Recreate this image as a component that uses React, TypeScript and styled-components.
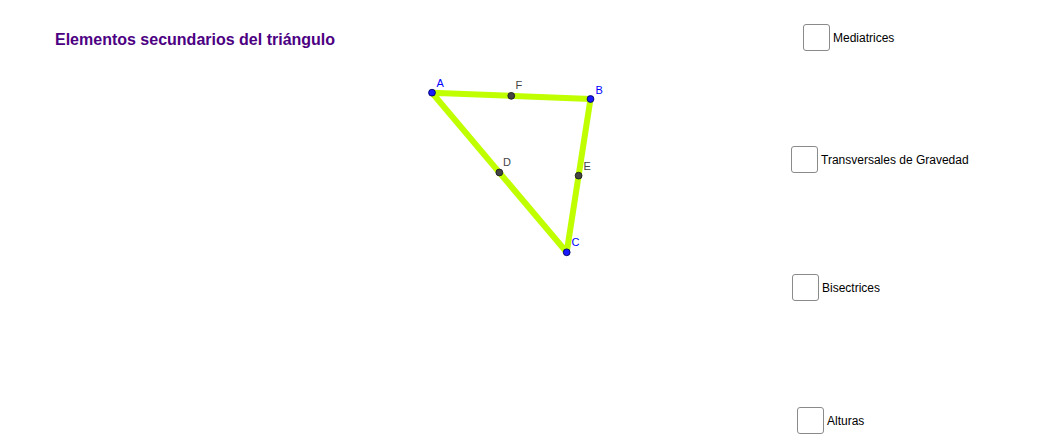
import { FC } from 'react';
import styled, { createGlobalStyle } from 'styled-components';

const GlobalStyle = createGlobalStyle`
  html, body {
    margin: 0;
    padding: 0;
    background: #ffffff;
  }
  body {
    font-family: 'Liberation Sans', Arial, sans-serif;
  }
`;

// the geogebra graphics view: everything on it sits at its own coordinates
const Stage = styled.div`
  position: relative;
  width: 1046px;
  height: 444px;
  overflow: hidden;
  background: #ffffff;
`;

const Title = styled.h1`
  position: absolute;
  left: 55px;
  top: 31px;
  margin: 0;
  font-size: 16px;
  line-height: 18px;
  font-weight: 700;
  color: #4c0082;
  white-space: nowrap;
`;

const Drawing = styled.svg`
  position: absolute;
  left: 0;
  top: 0;
`;

const Toggle = styled.label<{ $x: number; $y: number }>`
  position: absolute;
  left: ${({ $x }) => $x}px;
  top: ${({ $y }) => $y}px;
  display: flex;
  align-items: center;
  gap: 3px;
  cursor: pointer;
`;

const Box = styled.span`
  width: 25px;
  height: 25px;
  border: 1px solid #8a8a8a;
  border-radius: 3px;
  background: #ffffff;
`;

const ToggleText = styled.span`
  font-size: 12px;
  color: #000000;
  white-space: nowrap;
`;

type Pt = { name: string; x: number; y: number; lx: number; ly: number; vertex: boolean };

const A = { x: 432, y: 92.7 };
const B = { x: 590.5, y: 99 };
const C = { x: 566.7, y: 252.3 };

const points: Pt[] = [
  { name: 'A', ...A, lx: 436.5, ly: 87, vertex: true },
  { name: 'B', ...B, lx: 595.5, ly: 94, vertex: true },
  { name: 'C', ...C, lx: 571.5, ly: 246, vertex: true },
  { name: 'F', x: (A.x + B.x) / 2, y: (A.y + B.y) / 2, lx: 515.5, ly: 89, vertex: false },
  { name: 'D', x: (A.x + C.x) / 2, y: (A.y + C.y) / 2, lx: 503, ly: 166, vertex: false },
  { name: 'E', x: (B.x + C.x) / 2, y: (B.y + C.y) / 2, lx: 583.5, ly: 170, vertex: false },
];

const toggles = [
  { label: 'Mediatrices', x: 803, y: 24 },
  { label: 'Transversales de Gravedad', x: 791, y: 146 },
  { label: 'Bisectrices', x: 792, y: 274 },
  { label: 'Alturas', x: 797, y: 407 },
];

const Triangle: FC = () => (
  <Drawing width={1046} height={444} viewBox='0 0 1046 444'>
    <polygon
      points={`${A.x},${A.y} ${B.x},${B.y} ${C.x},${C.y}`}
      fill='none'
      stroke='#bfff00'
      strokeWidth={6}
      strokeLinejoin='round'
    />
    {points.map((p) => (
      <g key={p.name}>
        <circle
          cx={p.x}
          cy={p.y}
          r={3.4}
          fill={p.vertex ? '#1a1aff' : '#444444'}
          stroke={p.vertex ? '#000066' : '#1e1e1e'}
          strokeWidth={0.9}
        />
        <text
          x={p.lx}
          y={p.ly}
          fontFamily="'Liberation Sans', Arial, sans-serif"
          fontSize={11}
          fill={p.vertex ? '#0000ff' : '#444444'}
        >
          {p.name}
        </text>
      </g>
    ))}
  </Drawing>
);

const App: FC = () => {
  return (
    <>
      <GlobalStyle />
      <Stage>
        <Triangle />
        <Title>Elementos secundarios del triángulo</Title>
        {toggles.map((t) => (
          <Toggle key={t.label} $x={t.x} $y={t.y}>
            <Box />
            <ToggleText>{t.label}</ToggleText>
          </Toggle>
        ))}
      </Stage>
    </>
  );
};

export default App;
